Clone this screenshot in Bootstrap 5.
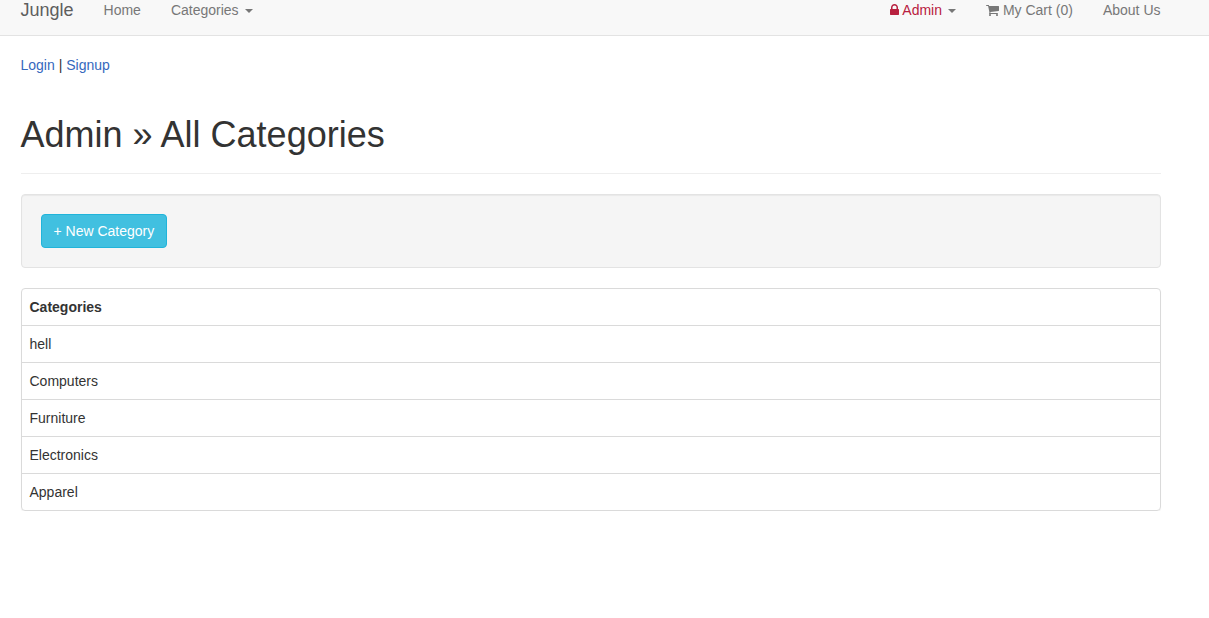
<!DOCTYPE html>
<html lang="en">
<head>
<meta charset="utf-8">
<meta name="viewport" content="width=device-width, initial-scale=1">
<title>Jungle</title>
<link href="https://cdn.jsdelivr.net/npm/bootstrap@5.3.0/dist/css/bootstrap.min.css" rel="stylesheet">
<style>
  body { font-family: "Liberation Sans", Arial, sans-serif; font-size: 14px; line-height: 20px; color: #333; }
  a { color: #3568bd; }
  .page-gutter { padding-right: 28px; }
  .page-inner { max-width: 1170px; padding-left: 15px; padding-right: 15px; }
  .site-nav { background: #f8f8f8; border-bottom: 1px solid #e3e3e3; padding: 0 28px 15px 0; margin-bottom: 19px; }
  .site-nav .page-inner { padding-left: 15px; padding-right: 15px; }
  .site-nav .navbar-brand { font-size: 18px; line-height: 20px; padding: 0; margin-right: 15px; color: #5e5e5e; }
  .site-nav .navbar-nav .nav-link { padding: 0 15px; color: #777; }
  .site-nav .navbar-nav:last-child .nav-link:last-child { margin-right: -15px; }
  .site-nav .navbar-nav .admin-link { color: #b8203f; }
  .site-nav .dropdown-toggle::after { margin-left: 6px; vertical-align: 2px; border-top: 4px solid #777; border-right: 4px solid transparent; border-left: 4px solid transparent; }
  .nav-icon { fill: currentColor; height: 12px; vertical-align: -1px; }
  .page-title { border-bottom: 1px solid #eee; margin: 40px 0 20px; padding-bottom: 18px; }
  .page-title h1 { font-size: 36px; line-height: 40px; font-weight: 400; }
  .toolbar { background: #f5f5f5; border: 1px solid #e3e3e3; border-radius: 4px; padding: 19px; margin-bottom: 20px; box-shadow: inset 0 1px 1px rgba(0,0,0,.05); }
  .btn-new { --bs-btn-color: #fff; --bs-btn-bg: #41c0e0; --bs-btn-border-color: #20b4da; --bs-btn-hover-color: #fff; --bs-btn-hover-bg: #2aaed0; --bs-btn-font-size: 14px; --bs-btn-line-height: 20px; --bs-btn-padding-x: 12px; --bs-btn-padding-y: 6px; --bs-btn-border-radius: 4px; }
  .category-panel { border: 1px solid #dadada; border-radius: 4px; box-shadow: 0 1px 1px rgba(0,0,0,.05); }
  .category-panel .table { --bs-table-bg: transparent; color: #333; border-color: #dadada; }
  .category-panel th, .category-panel td { padding: 8px; }
  .category-panel tr:last-child td { border-bottom: 0; }
  .category-panel thead tr th { border-bottom: 1px solid #dadada; }
  .category-panel .table > tbody { border-top: 0; }
</style>
</head>
<body>
<nav class="navbar navbar-expand-md site-nav">
  <div class="container-fluid page-inner">
    <a class="navbar-brand" href="#">Jungle</a>
    <div class="navbar-nav me-auto">
      <a class="nav-link" href="#">Home</a>
      <a class="nav-link dropdown-toggle" href="#" role="button" data-bs-toggle="dropdown">Categories</a>
    </div>
    <div class="navbar-nav">
      <a class="nav-link dropdown-toggle admin-link" href="#" role="button" data-bs-toggle="dropdown"><svg class="nav-icon" width="9" viewBox="0 128 1152 1536" preserveAspectRatio="xMidYMin meet" aria-hidden="true"><path d="M320 768h512v-192q0-106-75-181t-181-75-181 75-75 181v192zm832 96v576q0 40-28 68t-68 28h-960q-40 0-68-28t-28-68v-576q0-40 28-68t68-28h32v-192q0-184 132-316t316-132 316 132 132 316v192h32q40 0 68 28t28 68z"/></svg> Admin</a>
      <a class="nav-link" href="#"><svg class="nav-icon" width="13" viewBox="0 0 1664 1536" preserveAspectRatio="xMidYMax meet" aria-hidden="true"><path d="M640 1408q0 52-38 90t-90 38-90-38-38-90 38-90 90-38 90 38 38 90zm896 0q0 52-38 90t-90 38-90-38-38-90 38-90 90-38 90 38 38 90zm128-1088v512q0 24-16.500 42.500t-40.500 21.500l-1044 122q13 60 13 70 0 16-24 64h920q26 0 45 19t19 45-19 45-45 19h-1024q-26 0-45-19t-19-45q0-11 8-31.500t16-36 21.500-40 15.500-29.500l-177-823h-204q-26 0-45-19t-19-45 19-45 45-19h256q16 0 28.500 6.500t19.500 15.500 13 24.500 8 26 5.500 29.500 4.500 26h1201q26 0 45 19t19 45z"/></svg> My Cart (0)</a>
      <a class="nav-link" href="#">About Us</a>
    </div>
  </div>
</nav>

<main class="page-gutter">
<div class="container-fluid page-inner">
  <div><a class="text-decoration-none" href="#">Login</a> | <a class="text-decoration-none" href="#">Signup</a></div>

  <header class="page-title">
    <h1 class="m-0">Admin » All Categories</h1>
  </header>

  <div class="toolbar d-flex">
    <button type="button" class="btn btn-new">+ New Category</button>
  </div>

  <div class="category-panel">
    <table class="table mb-0">
      <thead><tr><th scope="col">Categories</th></tr></thead>
      <tbody>
        <tr><td>hell</td></tr>
        <tr><td>Computers</td></tr>
        <tr><td>Furniture</td></tr>
        <tr><td>Electronics</td></tr>
        <tr><td>Apparel</td></tr>
      </tbody>
    </table>
  </div>
</div>
</main>
<script src="https://cdn.jsdelivr.net/npm/bootstrap@5.3.0/dist/js/bootstrap.bundle.min.js"></script>
</body>
</html>
